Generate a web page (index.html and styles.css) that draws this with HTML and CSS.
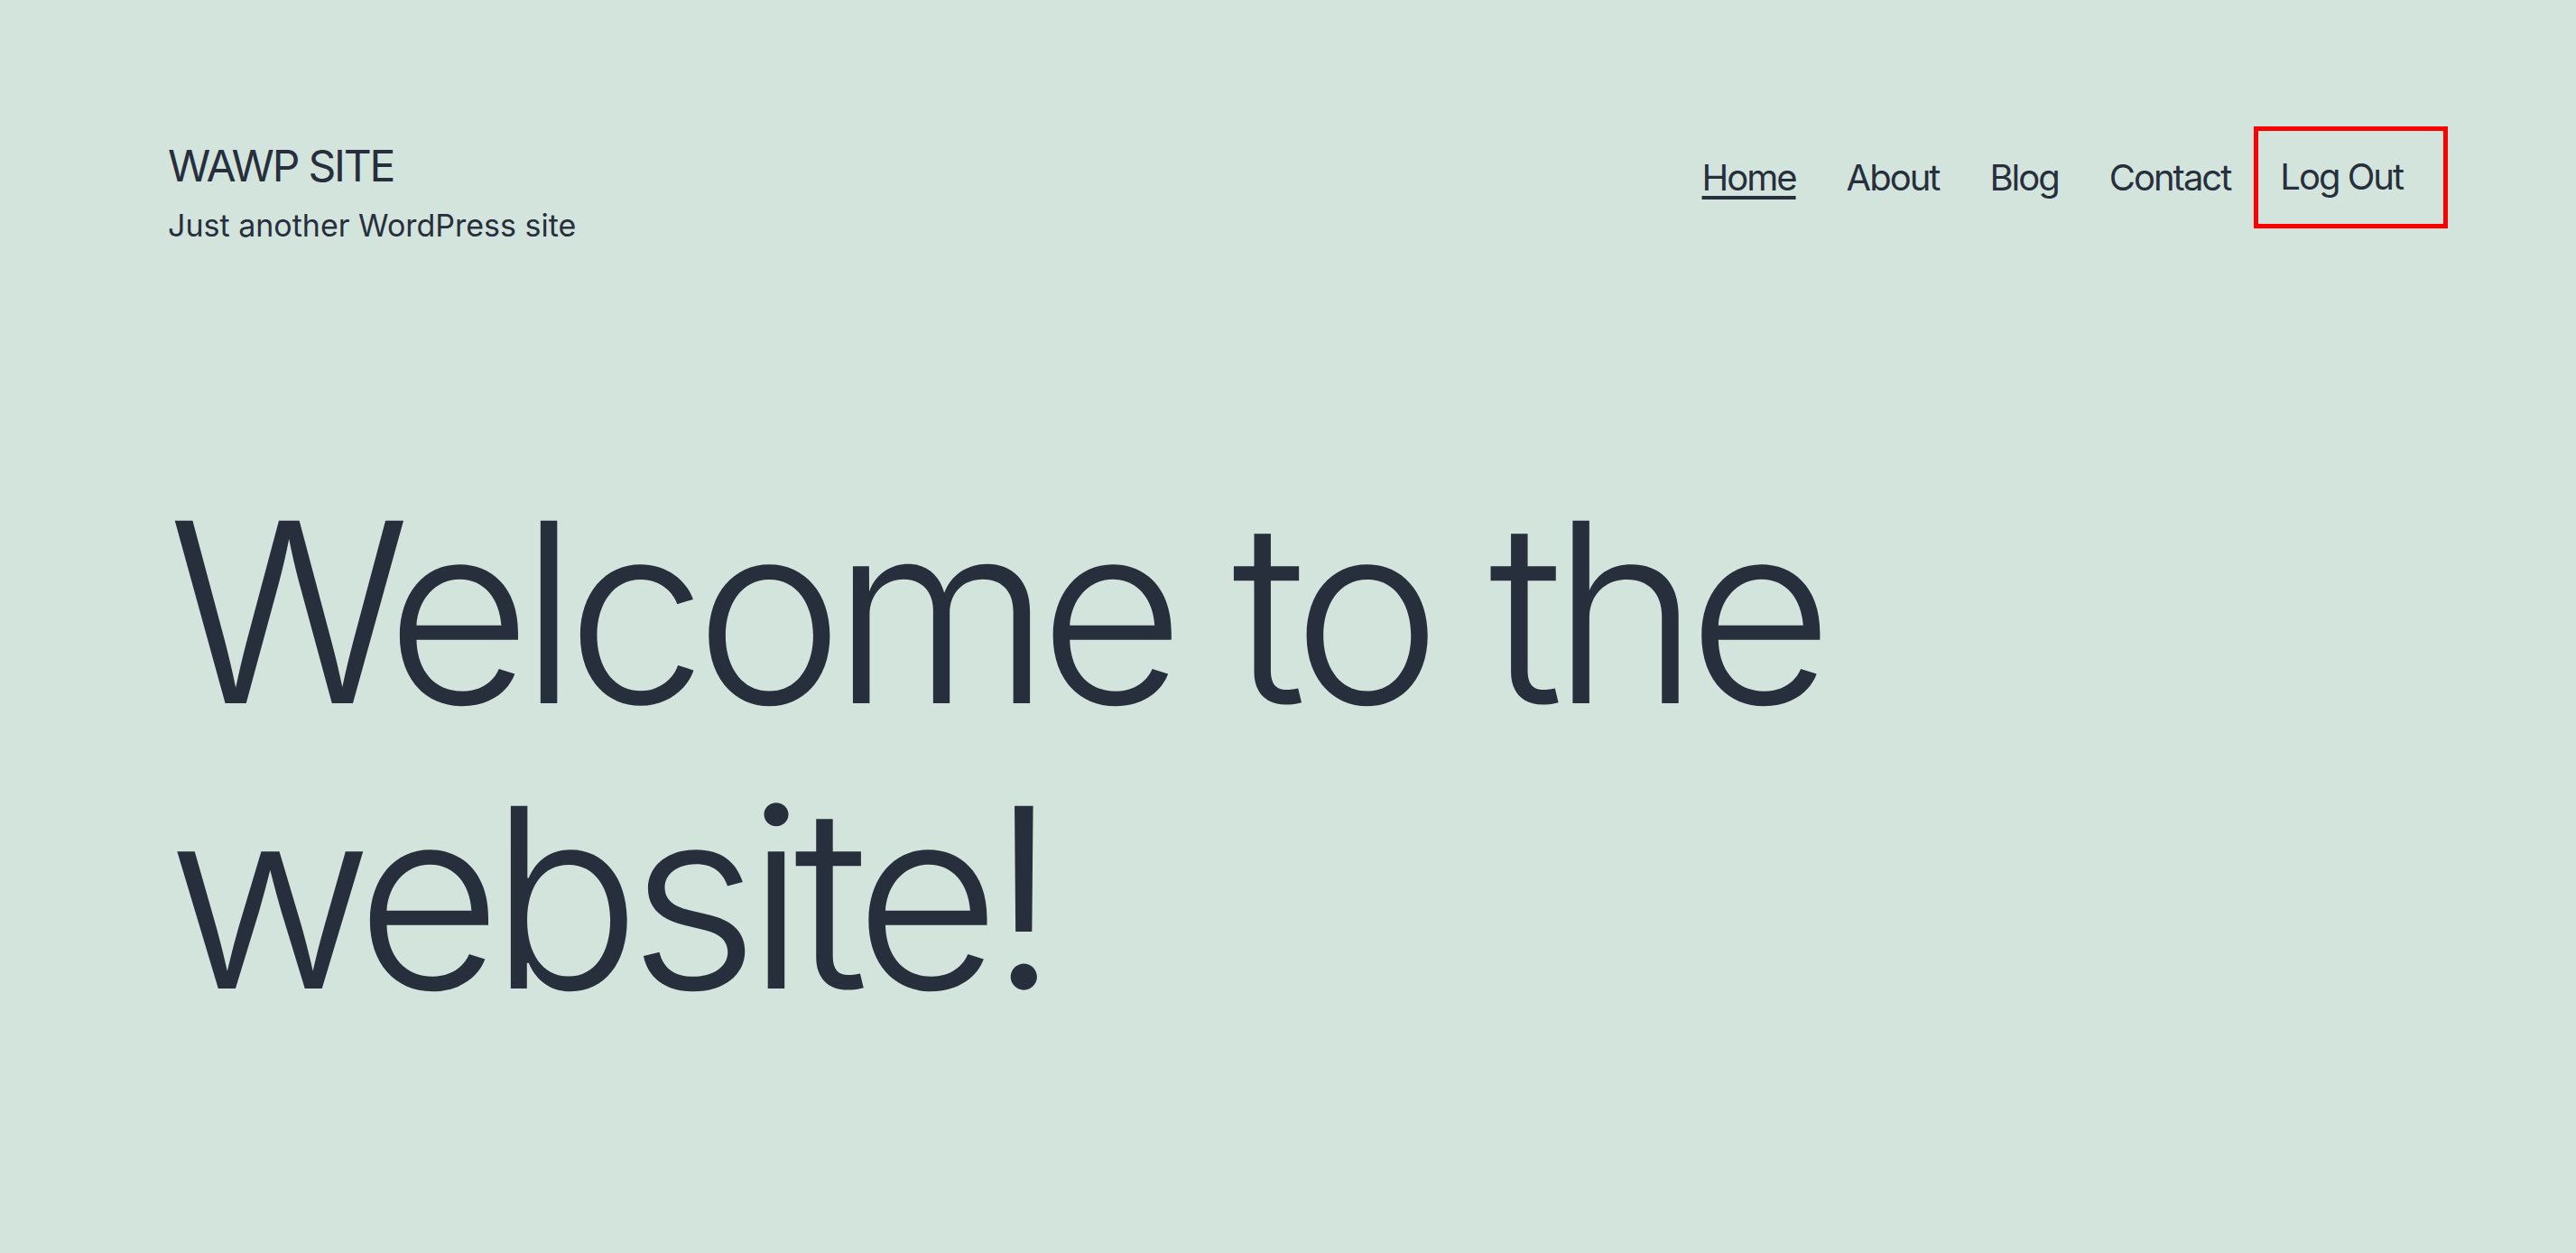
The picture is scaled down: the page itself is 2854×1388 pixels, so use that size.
FILE: index.html
```html
<!DOCTYPE html>
<html lang="en">
<head>
<meta charset="utf-8">
<title>WAWP SITE – Just another WordPress site</title>
<link rel="stylesheet" href="styles.css">
</head>
<body>
<header class="site-header">
  <div class="branding">
    <p class="site-title">WAWP SITE</p>
    <p class="site-description">Just another WordPress site</p>
  </div>
  <nav class="primary-nav">
    <ul class="menu">
      <li class="menu-item"><a class="menu-link is-current" href="#">Home</a></li>
      <li class="menu-item"><a class="menu-link" href="#">About</a></li>
      <li class="menu-item"><a class="menu-link" href="#">Blog</a></li>
      <li class="menu-item"><a class="menu-link" href="#">Contact</a></li>
      <li class="menu-item menu-item-highlight"><a class="menu-link" href="#">Log Out</a></li>
    </ul>
  </nav>
</header>
<main class="site-main">
  <h1 class="hero-title">Welcome to the website!</h1>
</main>
</body>
</html>
```
FILE: styles.css
```css
html, body {
  margin: 0;
  padding: 0;
}
body {
  background: #d3e4dd;
  color: #272f3c;
  font-family: Inter, "Noto Sans", "Liberation Sans", sans-serif;
  min-height: 1388px;
}
.site-header {
  display: flex;
  justify-content: space-between;
  align-items: flex-start;
  padding: 140px 142px 0 186px;
}
.branding {
  display: flex;
  flex-direction: column;
  margin-top: 19.5px;
}
.site-title {
  margin: 0;
  font-size: 48px;
  line-height: 48px;
  font-weight: 400;
  letter-spacing: -2.2px;
}
.site-description {
  margin: 26px 0 0;
  font-size: 34px;
  line-height: 32px;
  font-weight: 400;
}
.menu {
  list-style: none;
  margin: 0;
  padding: 0;
  display: flex;
  align-items: center;
  gap: 56px;
}
.menu-link {
  display: block;
  color: #272f3c;
  text-decoration: none;
  font-size: 40px;
  line-height: 40px;
  letter-spacing: -2px;
}
.menu-link.is-current {
  text-decoration: underline;
  text-decoration-thickness: 4px;
  text-underline-offset: 6px;
}
.menu-item-highlight {
  border: 5px solid #ff0000;
  padding: 31px 45px 32px 24px;
  margin-left: -30px;
}
.site-main {
  padding: 254px 0 0 186px;
}
.hero-title {
  margin: 0;
  font-size: 278px;
  line-height: 316.8px;
  font-weight: 300;
  letter-spacing: -13px;
}
```
